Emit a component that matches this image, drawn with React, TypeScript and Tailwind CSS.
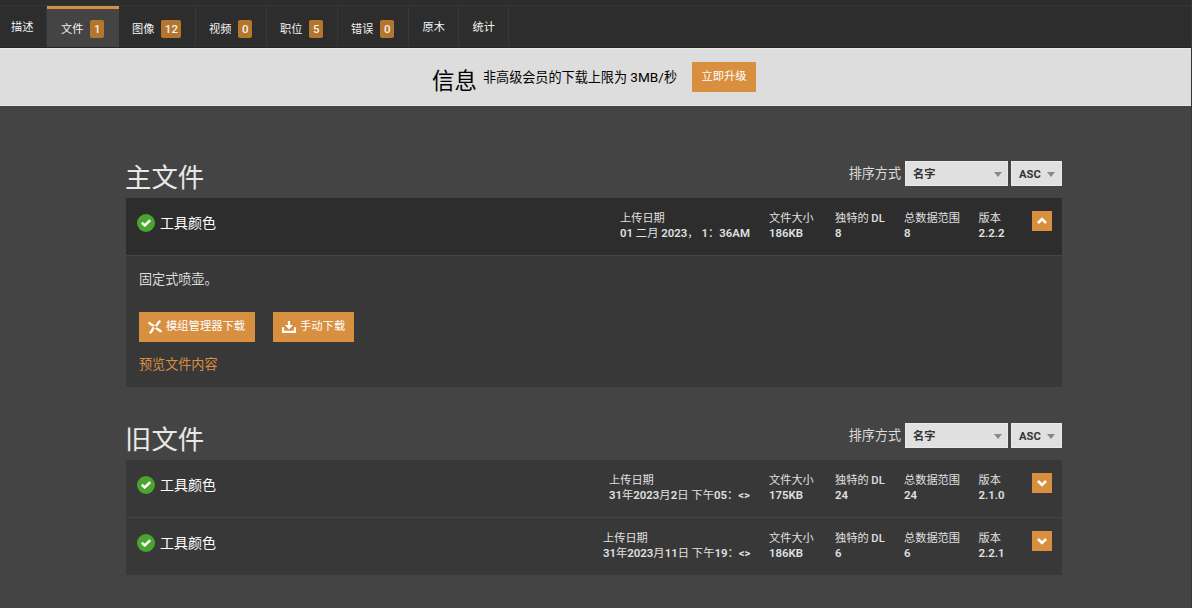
import { clsx } from 'clsx';

interface Tab {
  label: string;
  width: string;
  count?: number;
  active?: boolean;
}

interface ModFile {
  name: string;
  uploaded: string;
  dateWidth: string;
  size: string;
  unique: string;
  total: string;
  version: string;
}

const tabs: Tab[] = [
  { label: '描述', width: 'w-[47px] pl-[11px]' },
  { label: '文件', width: 'w-[72px] pl-[14px]', count: 1, active: true },
  { label: '图像', width: 'w-[77px] pl-[13px]', count: 12 },
  { label: '视频', width: 'w-[71px] pl-[13px]', count: 0 },
  { label: '职位', width: 'w-[71px] pl-[13px]', count: 5 },
  { label: '错误', width: 'w-[71px] pl-[13px]', count: 0 },
  { label: '原木', width: 'w-[50px] pl-[13.5px]' },
  { label: '统计', width: 'w-[50px] pl-[13.5px]' },
];

const mainFile: ModFile = {
  name: '工具颜色',
  uploaded: '01 二月 2023， 1：36AM',
  dateWidth: 'w-[149px]',
  size: '186KB',
  unique: '8',
  total: '8',
  version: '2.2.2',
};

const oldFiles: ModFile[] = [
  {
    name: '工具颜色',
    uploaded: '31年2023月2日 下午05：<>',
    dateWidth: 'w-[160px]',
    size: '175KB',
    unique: '24',
    total: '24',
    version: '2.1.0',
  },
  {
    name: '工具颜色',
    uploaded: '31年2023月11日 下午19：<>',
    dateWidth: 'w-[166px]',
    size: '186KB',
    unique: '6',
    total: '6',
    version: '2.2.1',
  },
];

function TabBar() {
  return (
    <nav className="flex h-12 items-end border-b border-[#252525] bg-[#2d2d2d] pt-[5px]">
      <div className="flex h-[42px] w-full border-t border-[#353535]">
        {tabs.map(tab => (
          <div
            key={tab.label}
            className={clsx(
              'flex shrink-0 whitespace-nowrap text-[11.2px] leading-[18px] text-[#f2f2f2]',
              tab.width,
              tab.active
                ? 'border-t-[3px] border-[#d98f40] bg-[#444444] pt-[11px]'
                : 'border-r border-[#373737]',
              !tab.active && (tab.count === undefined ? 'pt-[13px]' : 'pt-[14px]'),
            )}
          >
            <span className={tab.count === undefined ? '' : 'pt-px'}>{tab.label}</span>
            {tab.count !== undefined && (
              <span
                className={clsx(
                  'ml-[7px] h-[18px] rounded-[2px] bg-[#b4762c] text-center text-[11.5px] font-medium',
                  tab.count > 9 ? 'w-5' : 'w-[14px]',
                )}
              >
                {tab.count}
              </span>
            )}
          </div>
        ))}
      </div>
    </nav>
  );
}

function PremiumNotice() {
  return (
    <div className="flex h-[58px] border-y border-y-[#e8e8e8] bg-[#dddddd] pl-[432px] text-black">
      <span className="mt-[16px] w-[51px] text-[22.4px] leading-8">信息</span>
      <span className="mt-[18px] w-[209px] whitespace-nowrap text-[13.1px] leading-5">
        非高级会员的下载上限为 <span className="text-[13.6px]">3MB/</span>秒
      </span>
      <button className="mt-[13px] flex h-[30px] w-16 items-center justify-center bg-[#d98f40] text-[11.2px] text-white">
        立即升级
      </button>
    </div>
  );
}

function Select({ label, className }: { label: string; className: string }) {
  return (
    <div
      className={clsx(
        'flex h-[25px] items-center justify-between border border-[#e9e9e9] bg-[#e0e0e0] pl-[7px] text-[11.2px] font-bold text-[#333]',
        className,
      )}
    >
      <span className="pt-[3px]">{label}</span>
      <svg viewBox="0 0 8 5" className="mt-0.5 h-[5px] w-2 fill-[#888]">
        <path d="M0 0h8L4 5z" />
      </svg>
    </div>
  );
}

function SectionHeader({ title }: { title: string }) {
  return (
    <div className="flex h-[37px] items-start justify-between">
      <h2 className="mt-px -ml-px text-[26.4px] leading-8 text-[#e8e8e8]">{title}</h2>
      <div className="flex">
        <span className="mt-px mr-1 text-[13.1px] leading-6 text-[#dcdcdc]">排序方式</span>
        <Select label="名字" className="mr-[3px] w-[103px] pr-[5px]" />
        <Select label="ASC" className="w-[51px] pr-[6px]" />
      </div>
    </div>
  );
}

function Stat({ label, value, className }: { label: React.ReactNode; value: string; className: string }) {
  return (
    <div className={clsx('shrink-0 whitespace-nowrap', className)}>
      <p className="h-[14px]">{label}</p>
      <p className="h-[14px] text-[11.4px] font-semibold">
        {value.split(/([^\x00-\x7f]+)/).map((part, i) => (
          <span key={i} className={i % 2 ? 'text-[11.3px] font-normal' : ''}>{part}</span>
        ))}
      </p>
    </div>
  );
}

function Chevron({ up }: { up?: boolean }) {
  return (
    <svg viewBox="0 0 10 8" className="h-2 w-[10px]" fill="none" stroke="white" strokeWidth="2.5">
      <path d={up ? 'M1 6l4-4 4 4' : 'M1 2l4 4 4-4'} />
    </svg>
  );
}

function FileRow({ file, open }: { file: ModFile; open?: boolean }) {
  return (
    <div className={clsx('flex h-[57px] pl-[11px]', open ? 'bg-[#2d2d2d]' : 'bg-[#383838]')}>
      <span className="mt-4 flex size-[18px] items-center justify-center rounded-full bg-[#4aa52e]">
        <svg viewBox="0 0 10 8" className="h-2 w-[10px]" fill="none" stroke="white" strokeWidth="2.6">
          <path d="M.8 3.8l2.9 2.6L9.2 1.2" />
        </svg>
      </span>
      <span className="mt-[14px] ml-[5px] text-[14px] leading-[22px] text-white">{file.name}</span>
      <div className="mt-[14px] ml-auto flex text-[11.2px] leading-[14px] text-[#e0e0e0]">
        <Stat label="上传日期" value={file.uploaded} className={file.dateWidth} />
        <Stat label="文件大小" value={file.size} className="w-[66px]" />
        <Stat label={<>独特的 <span className="font-medium">DL</span></>} value={file.unique} className="w-[69px]" />
        <Stat label="总数据范围" value={file.total} className="w-[74.5px]" />
        <Stat label="版本" value={file.version} className="w-[53.5px]" />
      </div>
      <button className="mt-[13px] mr-[10px] flex size-5 items-center justify-center bg-[#d98f40]">
        <Chevron up={open} />
      </button>
    </div>
  );
}

function VortexIcon() {
  return (
    <svg viewBox="0 0 14 14" className="h-[14px] w-[14px]" fill="none" stroke="white" strokeWidth="2.4">
      <path d="M1 2c.6 3 3.6 2 5 4.2M12.4 1.2C9.4 2 10 4.8 7.8 6M8 7.8c1.2 2.3 4.4 1.4 5 4.4M6 7.6C3.8 9 4.6 11.8 1.6 12.8" />
    </svg>
  );
}

function DownloadIcon() {
  return (
    <svg viewBox="0 0 14 12" className="h-3 w-[14px]" fill="white">
      <path d="M5.9 0h2.2v4h3L7 8.4 2.9 4h3z" />
      <path d="M0 6.3h2.1v3.5h9.8V6.3H14V12H0z" />
    </svg>
  );
}

export default function App() {
  return (
    <div className="h-[608px] overflow-hidden border-r border-[#303838] bg-[#444444] font-['Roboto','Noto_Sans_CJK_SC',sans-serif]">
      <TabBar />
      <PremiumNotice />
      <main className="ml-[126px] w-[936px] pt-[55px]">
        <section>
          <SectionHeader title="主文件" />
          <FileRow file={mainFile} open />
          <div className="mt-px h-[131px] bg-[#383838] pt-[14px] pl-[13px]">
            <p className="text-[13.1px] leading-5 text-[#dcdcdc]">固定式喷壶。</p>
            <div className="mt-[22px] flex gap-[18px] text-[11.3px] text-white">
              <button className="flex h-[30px] w-[116px] items-center gap-1 bg-[#d98f40] pl-[9px]">
                <VortexIcon />
                <span>模组管理器下载</span>
              </button>
              <button className="flex h-[30px] w-[81px] items-center gap-1 bg-[#d98f40] pl-[9px]">
                <DownloadIcon />
                <span>手动下载</span>
              </button>
            </div>
            <a className="mt-[13px] block text-[13.1px] leading-5 text-[#d98f40]">预览文件内容</a>
          </div>
        </section>
        <section className="mt-9">
          <SectionHeader title="旧文件" />
          <div className="flex flex-col gap-px">
            {oldFiles.map(file => (
              <FileRow key={file.version} file={file} />
            ))}
          </div>
        </section>
      </main>
    </div>
  );
}
